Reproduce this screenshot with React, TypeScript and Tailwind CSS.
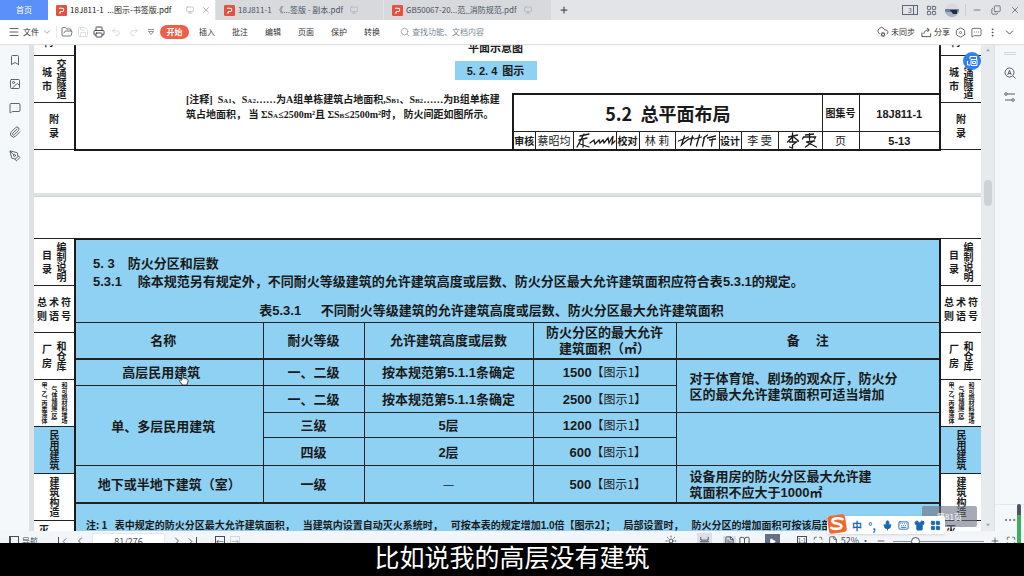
import type { ReactNode } from 'react'
import {
  Bookmark, ChevronDown, ChevronLeft, ChevronRight, Copy, FolderOpen, Hexagon, Image, LayoutGrid, Maximize,
  Menu, MessageSquare, MessageSquareMore, Minus, Monitor, MoreVertical, Paperclip, PenTool, Plus,
  Printer, Redo2, Save, Search, Share, Undo2, X, BookOpen, FileText, File, Play, Mic, Keyboard, Shirt, CloudCog, MoreHorizontal, Sun,
} from 'lucide-react'

type Col = { text: string; kind?: 'loose' | 'tight' | 'tiny' }
type Cell = { cols: Col[]; active?: boolean; h?: string }

const tabs = [
  { name: '18J811-1  ...图示-书签版.pdf', active: true },
  { name: '18J811-1  《...签版 - 副本.pdf' },
  { name: 'GB50067-20...范_消防规范.pdf' },
]
const menus = ['插入', '批注', '编辑', '页面', '保护', '转换']

const page1Cells: Cell[] = [
  { cols: [{ text: '构' }], h: 'h-[12px] items-end pb-2 pr-3' },
  { cols: [{ text: '城市', kind: 'loose' }, { text: '交通隧道' }] },
  { cols: [{ text: '附录', kind: 'loose' }] },
]
const page2Cells: Cell[] = [
  { cols: [{ text: '目录', kind: 'loose' }, { text: '编制说明' }] },
  { cols: [{ text: '总则', kind: 'loose' }, { text: '术语', kind: 'loose' }, { text: '符号', kind: 'loose' }] },
  { cols: [{ text: '厂房', kind: 'loose' }, { text: '和仓库' }] },
  { cols: [{ text: '甲、乙、丙类液体', kind: 'tiny' }, { text: '气体储罐(区)', kind: 'tiny' }, { text: '和可燃材料堆场', kind: 'tiny' }] },
  { cols: [{ text: '民用建筑' }], active: true },
  { cols: [{ text: '建筑构造' }] },
  { cols: [{ text: '灭', kind: 'loose' }], h: 'h-[47px] items-start pt-1 pr-5' },
]

const kinds = {
  loose: 'flex flex-col gap-1 text-[10px] leading-[10px]',
  tight: '[writing-mode:vertical-rl] text-[10px] leading-[10px]',
  tiny: "[writing-mode:vertical-rl] text-[6px] leading-[8px] [font-feature-settings:'vhal']",
}

const N = ({ children }: { children: ReactNode }) => (
  <span className="font-['Liberation_Sans',sans-serif] leading-none">{children}</span>
)

const Fig = ({ n = '1' }: { n?: string }) => (
  <span className="text-xs leading-none font-normal">【图示{n}】</span>
)

function SideIndex({ cells }: { cells: Cell[] }) {
  return (
    <div className="w-10 shrink-0 font-bold whitespace-nowrap">
      {cells.map((c, i) => (
        <div key={i} className={`flex justify-center overflow-hidden border-b border-[#222] ${c.cols.length === 3 ? 'gap-[2px]' : 'gap-1'} ${c.h ?? 'h-[47px] items-center'} ${c.active ? 'bg-[#8fd1f2]' : 'bg-white'}`}>
          {c.cols.map(col => (
            <div key={col.text} className={kinds[col.kind ?? 'tight']}>
              {col.kind === 'loose' ? [...col.text].map((ch, k) => <span key={k}>{ch}</span>) : col.text}
            </div>
          ))}
        </div>
      ))}
    </div>
  )
}

function PdfMark() {
  return (
    <svg viewBox="0 0 12 12" className="size-[11px] shrink-0">
      <rect width="12" height="12" rx="1.5" fill="#e5503f" />
      <path d="M3.2 3.6h3.6a1.7 1.7 0 0 1 0 3.4H5.2L3.4 8.8M3.4 8.8h2" fill="none" stroke="#fff" strokeWidth="1.1" />
    </svg>
  )
}

function TabBar() {
  return (
    <div className="flex h-5 shrink-0 items-center bg-[#e2e4e7] text-[8px] text-[#4a5364]">
      <button className="h-full w-12 bg-[#5b8ff9] text-white">首页</button>
      <div role="tablist" className="flex h-full gap-px">
        {tabs.map(t => (
          <div key={t.name} className={`flex h-full w-[167px] items-center gap-[3px] pl-2 ${t.active ? 'bg-white text-[#222]' : 'bg-[#d7d9dc]'}`}>
            <PdfMark />
            <button role="tab" aria-selected={!!t.active} className="whitespace-pre">{t.name}</button>
            <Monitor className={`size-2 text-[#a9b0bb] ${t.active ? 'ml-auto' : 'ml-1'}`} />
            {t.active && <button aria-label="关闭标签" className="mx-1"><X className="size-[10px] text-[#8a909a]" strokeWidth={1.5} /></button>}
          </div>
        ))}
      </div>
      <button aria-label="新建" className="ml-2"><Plus className="size-[10px]" strokeWidth={3} /></button>
      <div className="ml-auto flex items-center pr-1 text-[#5d6677]">
        <button aria-label="窗口列表" className="flex h-[10px] w-4 items-center justify-end gap-px border border-current text-[7px] leading-none">
          3<span className="h-full w-1 border-l border-current" />
        </button>
        <button aria-label="应用" className="ml-2"><LayoutGrid className="size-[11px]" strokeWidth={2} /></button>
        <svg viewBox="0 0 14 14" className="ml-2 size-[14px]">
          <clipPath id="av"><circle cx="7" cy="7" r="7" /></clipPath>
          <g clipPath="url(#av)">
            <rect width="14" height="14" fill="#d8dadd" />
            <rect y="6" width="14" height="4" fill="#6f7f98" />
            <rect y="9" width="14" height="5" fill="#a9b4c0" />
            <path d="M5 7h7v4H8z" fill="#1f2c48" />
          </g>
        </svg>
        <span className="mx-[6px] h-3 w-px bg-[#c9cdd2]" />
        <button aria-label="最小化"><Minus className="size-[10px]" /></button>
        <button aria-label="还原" className="ml-[9px]"><Copy className="size-[10px] -scale-y-100" strokeWidth={2} /></button>
        <button aria-label="关闭" className="ml-[9px]"><X className="size-[10px]" strokeWidth={2} /></button>
      </div>
    </div>
  )
}

function Toolbar() {
  return (
    <div className="z-10 flex h-6 shrink-0 items-center bg-white px-2 text-[8px] text-[#333] shadow-[0_1px_1px_#dfe2e4]">
      <button className="flex items-center gap-[3px]"><Menu className="size-3" strokeWidth={1.5} />文件<ChevronDown className="size-[10px] text-gray-500" strokeWidth={1.5} /></button>
      <span className="mx-1 h-3 w-px bg-gray-200" />
      <div className="flex items-center gap-1 text-[#444c58]">
        <button aria-label="打开"><FolderOpen className="size-3" strokeWidth={1.5} /></button>
        <button aria-label="保存" className="text-gray-300"><Save className="size-3" strokeWidth={1.5} /></button>
        <button aria-label="打印"><Printer className="size-3" strokeWidth={2} /></button>
        <button aria-label="撤销" className="ml-[2px] text-gray-300"><Undo2 className="size-[10px]" /></button>
        <button aria-label="重做" className="ml-1 text-gray-300"><Redo2 className="size-[10px]" /></button>
        <button aria-label="更多" className="ml-1">
          <svg viewBox="0 0 8 8" className="size-2"><path d="M1 1.5h6M1.5 3.5h5L4 6.5z" fill="none" stroke="#777" strokeWidth=".8" /></svg>
        </button>
      </div>
      <button className="ml-[5px] h-[14px] w-[29px] rounded-full bg-[#ee5f4b] font-bold text-white">开始</button>
      <nav className="ml-[10px] flex gap-[17px]">
        {menus.map(m => <button key={m}>{m}</button>)}
      </nav>
      <label className="ml-5 flex items-center gap-[2px] text-[#7b8794]">
        <Search className="size-[10px]" strokeWidth={1.5} />
        <input aria-label="查找" placeholder="查找功能、文档内容" className="w-24 outline-none placeholder:text-[#7b8794]" />
      </label>
      <div className="ml-auto flex items-center">
        <button className="flex items-center gap-[2px]"><CloudCog className="size-3" strokeWidth={1.5} />未同步</button>
        <button className="ml-[6px] flex items-center gap-[2px]">
          <svg viewBox="0 0 12 12" className="size-[11px]" fill="none" stroke="currentColor" strokeWidth=".9">
            <path d="M1 6v4.500h9.500V7M3 7.500c.5-3 2.500-4.500 5.500-4.500M6.500 1l2.500 2-2 2.500" />
          </svg>
          分享
        </button>
        <button aria-label="设置" className="relative ml-[5px]">
          <Hexagon className="size-[11px]" strokeWidth={1.5} />
          <span className="absolute inset-1 rounded-full border border-gray-500" />
        </button>
        <button aria-label="反馈" className="ml-[5px]"><MessageSquareMore className="size-[11px]" strokeWidth={1.5} /></button>
        <button aria-label="菜单" className="ml-[5px]"><MoreVertical className="size-[11px]" strokeWidth={1.5} /></button>
        <button aria-label="收起" className="ml-[5px]"><ChevronDown className="size-[13px]" strokeWidth={1.5} /></button>
      </div>
    </div>
  )
}

function LeftRail() {
  const items = [
    { icon: Bookmark, label: '书签' },
    { icon: Image, label: '缩略图' },
    { icon: MessageSquare, label: '注释' },
    { icon: Paperclip, label: '附件' },
    { icon: PenTool, label: '签名' },
  ]
  return (
    <div className="flex w-[34px] shrink-0 flex-col items-center gap-3 border-r-[5px] border-[#dee2e4] bg-[#f5f8fa] pt-[10px] text-[#4a5563]">
      {items.map(({ icon: Icon, label }) => (
        <button key={label} aria-label={label}><Icon className="size-3" strokeWidth={1.8} /></button>
      ))}
    </div>
  )
}

function RightRail() {
  return (
    <>
      <div className="flex w-[14px] shrink-0 flex-col items-center justify-between border-r border-[#dcdfe2] bg-[#e8ebee] py-1">
        <svg viewBox="0 0 6 6" className="size-1"><path d="M0 5l3-4 3 4z" fill="#9aa1aa" /></svg>
        <span className="mt-32 mb-auto h-[26px] w-2 rounded-full bg-[#cdd1d8]" />
        <svg viewBox="0 0 6 6" className="size-1"><path d="M0 1l3 4 3-4z" fill="#9aa1aa" /></svg>
      </div>
      <div className="flex w-[29px] shrink-0 flex-col items-center bg-[#f5f8fa] text-[#555f6c]">
        <span className="mt-2 h-[3px] w-3 border-y border-gray-300" />
        <button aria-label="查找替换" className="mt-3">
          <svg viewBox="0 0 12 12" className="size-3" fill="none" stroke="currentColor">
            <circle cx="5.5" cy="5.5" r="4.5" /><path d="M3.8 7.8l1.7-4.6 1.7 4.6M4.4 6.5h2.4M9 9l2.5 2.5" />
          </svg>
        </button>
        <button aria-label="属性设置" className="mt-3">
          <svg viewBox="0 0 12 12" className="size-3" fill="none" stroke="currentColor">
            <circle cx="2" cy="3" r="1.3" /><path d="M3.5 3H11M1 9h6.5" /><circle cx="9" cy="9" r="1.3" />
          </svg>
        </button>
        <span className="mt-auto h-px w-full bg-gray-200" />
        <button aria-label="更多工具" className="mt-2 mb-1"><MoreHorizontal className="size-[14px]" strokeWidth={1.5} /></button>
      </div>
    </>
  )
}

const Sign = ({ d }: { d: string }) => (
  <svg viewBox="0 0 42 17" className="h-[17px] w-full" fill="none" stroke="#1a1a1a" strokeWidth="1.3" strokeLinecap="round"><path d={d} /></svg>
)

function PageOne() {
  return (
    <div className="flex bg-white pb-[42px]">
      <SideIndex cells={page1Cells} />
      <div className="flex h-[107px] flex-1 flex-col border-x-2 border-b-2 border-[#1d1a1a]">
        <div className="-mt-1 mr-6 text-center text-[11px] leading-[14px] font-bold">平面示意图</div>
        <div className="mt-[7px] mr-6 flex justify-center">
          <div className="h-[19px] w-[82px] bg-[#8fd1f2] text-center text-[11px] leading-[19px] font-bold"><N>5. 2. 4</N>&nbsp; 图示</div>
        </div>
        <div className="mt-[13px] flex flex-1 justify-between">
          <p className="ml-[110px] font-['Liberation_Serif','Noto_Sans_CJK_SC',serif] text-[10px] leading-[14px] font-bold whitespace-nowrap">
            [注释]&nbsp; S<small className="text-[7px]">A1</small>、S<small className="text-[7px]">A2</small>……为A组单栋建筑占地面积,S<small className="text-[7px]">B1</small>、S<small className="text-[7px]">B2</small>……为B组单栋建<br />
            筑占地面积，&nbsp;当 ΣS<small className="text-[7px]">A</small>≤2500m²且 ΣS<small className="text-[7px]">B</small>≤2500m²时，&nbsp;防火间距如图所示。
          </p>
          <table className="w-[427px] table-fixed border-collapse border-t-2 border-l-2 border-[#1d1a1a] text-center text-[11px] whitespace-nowrap [&_td]:border-r [&_td]:border-[#222] [&_td]:p-0 [&_td:last-child]:border-r-0">
            <colgroup>
              <col className="w-[22px]" /><col className="w-[38px]" /><col className="w-[43px]" /><col className="w-[23px]" /><col className="w-[36px]" /><col className="w-[44px]" />
              <col className="w-[22px]" /><col className="w-[37px]" /><col className="w-[44px]" /><col className="w-[37px]" /><col />
            </colgroup>
            <tbody>
              <tr className="h-[37px] border-b border-[#222]">
                <td colSpan={9} className="text-lg font-bold">5.2&nbsp; 总平面布局</td>
                <td className="text-[10px] font-bold">图集号</td>
                <td className="font-bold"><N>18J811-1</N></td>
              </tr>
              <tr className="h-[17px] leading-[17px]">
                <td className="text-[10px] font-bold">审核</td>
                <td>蔡昭均</td>
                <td><Sign d="M6 4l9-2M10 2L3 15M5 8l8-2M6 12l9 3M9 8v7M16 11l4-3 1 4 4-4 1 3 3-3 1 3 4-5 1 5 4-7-1 8 3-3" /></td>
                <td className="text-[10px] font-bold">校对</td>
                <td>林 莉</td>
                <td><Sign d="M2 9l10-4M8 4l-3 9 7-6 5-1M16 4l-2 9M18 7l7-2M23 3l-3 11M27 6l4-3M28 5l-2 9M31 6l8-2M33 8l6-1M36 7l-1 7" /></td>
                <td className="text-[10px] font-bold">设计</td>
                <td>李 雯</td>
                <td><Sign d="M9 5l9-2M13 1v8M14 4l-6 6M13 4l6 5M10 10h7l-4 3v3l-3-1M26 3l8-1M23 7l1-2h12l-1 2M30 2v6M27 10l8-1M34 9l-8 6M27 10l10 5" /></td>
                <td>页</td>
                <td className="font-bold"><N>5-13</N></td>
              </tr>
            </tbody>
          </table>
        </div>
      </div>
      <SideIndex cells={page1Cells} />
    </div>
  )
}

function PageTwo() {
  return (
    <div className="mt-1 flex bg-white pt-[41px] shadow-[0_-1px_1px_#cfd4d6]">
      <div className="border-t border-[#222]"><SideIndex cells={page2Cells} /></div>
      <div className="min-w-0 flex-1 border-x-2 border-t-2 border-[#1d1a1a] bg-[#8fd1f2] text-[13px] font-bold whitespace-nowrap">
        <div className="h-[82px] pt-[14px] leading-[18px]">
          <h2 className="ml-[17px]"><N>5. 3</N>&emsp;防火分区和层数</h2>
          <p className="ml-[17px]"><N>5.3.1</N>&emsp;&nbsp;除本规范另有规定外，不同耐火等级建筑的允许建筑高度或层数、防火分区最大允许建筑面积应符合表<N>5.3.1</N>的规定。</p>
          <p className="mt-[11px] mr-8 text-center">表<N>5.3.1</N>&emsp;&ensp;不同耐火等级建筑的允许建筑高度或层数、防火分区最大允许建筑面积</p>
        </div>
        <table className="w-full table-fixed border-collapse border-b-2 border-[#222] text-center leading-4 [&_td]:border-t [&_td]:border-r [&_td]:border-[#222] [&_td]:p-0 [&_td:last-child]:border-r-0 [&_th]:border-t [&_th]:border-r [&_th]:border-[#222] [&_th]:p-0 [&_th:last-child]:border-r-0">
          <colgroup>
            <col className="w-[187px]" /><col className="w-[101px]" /><col className="w-[169px]" /><col className="w-[143px]" /><col />
          </colgroup>
          <thead>
            <tr className="h-9 border-b-2 border-[#222]">
              <th className="pr-3!">名称</th>
              <th>耐火等级</th>
              <th>允许建筑高度或层数</th>
              <th>防火分区的最大允许<br />建筑面积（㎡）</th>
              <th>备&emsp;&nbsp;注</th>
            </tr>
          </thead>
          <tbody>
            <tr className="h-[27px]">
              <td className="pr-4!">高层民用建筑</td><td>一、二级</td><td>按本规范第<N>5.1.1</N>条确定</td><td><N>1500</N><Fig /></td>
              <td rowSpan={2}><div className="pl-[13px] text-left">对于体育馆、剧场的观众厅，防火分<br />区的最大允许建筑面积可适当增加</div></td>
            </tr>
            <tr className="h-[27px]">
              <td rowSpan={3} className="pr-3!">单、多层民用建筑</td><td>一、二级</td><td>按本规范第<N>5.1.1</N>条确定</td><td className="border-r!"><N>2500</N><Fig /></td>
            </tr>
            <tr className="h-[25px]">
              <td>三级</td><td><N>5</N>层</td><td><N>1200</N><Fig /></td><td rowSpan={2} />
            </tr>
            <tr className="h-7">
              <td>四级</td><td><N>2</N>层</td><td className="border-r!"><N>&ensp;600</N><Fig /></td>
            </tr>
            <tr className="h-[37px]">
              <td>地下或半地下建筑（室）</td><td>一级</td><td className="font-normal">—</td><td><N>&ensp;500</N><Fig /></td>
              <td><div className="pl-[13px] text-left">设备用房的防火分区最大允许建<br />筑面积不应大于<N>1000</N>㎡</div></td>
            </tr>
          </tbody>
        </table>
        <p className="mt-3 ml-[10px] flex gap-2 overflow-hidden text-[10px] leading-[17px]">
          <span>注: 1&ensp; 表中规定的防火分区最大允许建筑面积，</span>
          <span>当建筑内设置自动灭火系统时，</span>
          <span>可按本表的规定增加<N>1.0</N>倍【图示2】；</span>
          <span>局部设置时，</span>
          <span>防火分区的增加面积可按该局部</span>
        </p>
      </div>
      <div className="border-t border-[#222]"><SideIndex cells={page2Cells} /></div>
    </div>
  )
}

function StatusBar() {
  return (
    <div className="h-3 shrink-0 overflow-hidden bg-[#f3f6f8] text-[8px] text-[#444c58]">
      <div className="flex h-5 items-center pr-2 pl-[9px]">
        <button className="flex items-center gap-[3px]"><span className="h-[10px] w-[10px] border border-current border-l-2" />导航</button>
        <button aria-label="首页" className="ml-5 flex items-center"><span className="h-2 w-px bg-current" /><ChevronLeft className="size-[11px]" strokeWidth={1.8} /></button>
        <button aria-label="上一页" className="ml-1"><ChevronLeft className="size-3" strokeWidth={1.8} /></button>
        <input aria-label="页码" defaultValue="81/276" className="ml-[6px] h-4 w-[73px] border border-gray-200 bg-white text-center text-[9px]" />
        <button aria-label="下一页" className="ml-[6px]"><ChevronRight className="size-3" strokeWidth={1.8} /></button>
        <button aria-label="末页" className="ml-[2px] flex items-center"><ChevronRight className="size-[11px]" strokeWidth={1.8} /><span className="h-2 w-px bg-current" /></button>
        <button aria-label="后退" className="ml-[18px] h-[10px] w-[10px] border border-current text-[8px] leading-[7px]">←</button>
        <button aria-label="前进" className="ml-[5px] h-[10px] w-[10px] border border-gray-300 text-[8px] leading-[7px] text-gray-400">→</button>
        <div className="ml-auto flex items-center">
          <button aria-label="护眼模式"><Sun className="size-3" strokeWidth={1.8} /></button>
          <button aria-label="连续阅读" className="ml-[20px] flex h-4 w-[15px] items-center justify-center bg-[#dcdfe3]">
            <svg viewBox="0 0 12 12" className="size-[11px]" fill="none" stroke="currentColor"><path d="M2 1v3.500h8V1M2 12V8h8v4M1 6.300h10" /></svg>
          </button>
          <button aria-label="单页" className="ml-[11px] bg-[#dcdfe3] px-px"><FileText className="size-[11px]" /></button>
          <button aria-label="双页" className="ml-[3px]"><BookOpen className="size-[11px]" /></button>
          <button aria-label="播放" className="ml-[15px] flex h-[14px] w-[15px] items-center justify-center bg-[#667085] text-white"><Play className="size-[7px] fill-current" /></button>
          <button className="ml-[17px] h-[10px] w-[10px] border border-current text-[6px] leading-[8px]">1:1</button>
          <button aria-label="适合页面" className="ml-[6px]"><Maximize className="size-[10px]" /></button>
          <button aria-label="适合宽度" className="ml-[5px]"><File className="size-[10px]" /></button>
          <button className="ml-[3px] text-[9px]">52%&nbsp;·</button>
          <button aria-label="缩小" className="ml-[6px]"><Minus className="size-[10px]" /></button>
          <input aria-label="缩放" type="range" defaultValue={22} className="ml-[7px] h-px w-[91px] appearance-none bg-[#8d949e] [&::-webkit-slider-thumb]:size-[9px] [&::-webkit-slider-thumb]:appearance-none [&::-webkit-slider-thumb]:rounded-full [&::-webkit-slider-thumb]:border [&::-webkit-slider-thumb]:border-gray-600 [&::-webkit-slider-thumb]:bg-white" />
          <button aria-label="放大" className="ml-[6px]"><Plus className="size-[10px]" /></button>
          <button aria-label="全屏" className="ml-[6px]"><Maximize className="size-[10px]" /></button>
        </div>
      </div>
    </div>
  )
}

function ImeBar() {
  return (
    <div className="absolute right-[79px] bottom-[42px] z-20 flex h-[18px] items-center rounded-xs bg-white pl-[25px] text-[#1769b5] shadow-sm">
      <svg viewBox="0 0 20 20" className="absolute -top-[2px] left-0 size-5">
        <rect x="1" y="1" width="18" height="18" rx="3" fill="#ee6a32" transform="rotate(-8 10 10)" />
        <path d="M15.5 5.2C12 3.6 5.6 4 5.4 7c-.2 3 9 2.2 9 5.2 0 3-6.600 3.400-10.200 1.600" fill="none" stroke="#fff" strokeWidth="2.600" strokeLinecap="round" />
      </svg>
      <button className="text-[10px] font-bold">中</button>
      <button className="ml-[5px] w-[10px] text-[10px] font-bold">°,</button>
      <button aria-label="语音" className="ml-[5px]"><Mic className="size-[11px] fill-current" /></button>
      <button aria-label="键盘" className="ml-[5px]"><Keyboard className="size-[11px]" /></button>
      <button aria-label="皮肤" className="ml-[5px]"><Shirt className="size-[11px] fill-current" /></button>
      <button aria-label="工具箱" className="mr-1 ml-[5px]"><LayoutGrid className="size-[11px] fill-current" /></button>
    </div>
  )
}

export default function App() {
  return (
    <div className="relative flex h-screen flex-col overflow-hidden bg-black font-['Noto_Sans_CJK_SC',sans-serif] text-[#1a1a1a]">
      <TabBar />
      <Toolbar />
      <div className="flex min-h-0 flex-1">
        <LeftRail />
        <main className="relative min-w-0 flex-1 overflow-hidden bg-[#dee2e3]">
          <PageOne />
          <PageTwo />
          <button aria-label="翻译" className="absolute top-2 right-0 flex size-[18px] items-center justify-center rounded-full bg-[#2f80ed] text-white">
            <svg viewBox="0 0 12 12" className="size-3" fill="none" stroke="currentColor">
              <path d="M4 4V1.500h6.500V4M1.500 6v4H4M5 4.500h6v6H5zM6.500 6.500h3v2h-3z" />
            </svg>
          </button>
          <svg viewBox="0 0 12 14" className="absolute top-[328px] left-[144px] h-[14px] w-3" fill="#fff" stroke="#222" strokeWidth=".8">
            <path d="M4 8V2.200c0-1 1.400-1 1.400 0V6l1.200.2 1.200.4 1.400.4c.8.300.8 1 .8 2L9 13H4.500L1.500 9c-.4-.8.600-1.400 1.200-.8z" />
          </svg>
          <div className="absolute right-1 bottom-[4px] h-[21px] w-[55px] rounded-xs bg-gray-500/60 text-center text-[8px] leading-[21px] text-white">第81页</div>
        </main>
        <RightRail />
      </div>
      <StatusBar />
      <div className="absolute right-[3px] bottom-[33px] h-[39px] w-1 rounded-t-full bg-[linear-gradient(#4b5563_11px,#3fae5c_11px)]" />
      <ImeBar />
      <p className="h-[33px] shrink-0 text-center text-[25px] leading-[27px] text-white">比如说我的高层没有建筑</p>
    </div>
  )
}
